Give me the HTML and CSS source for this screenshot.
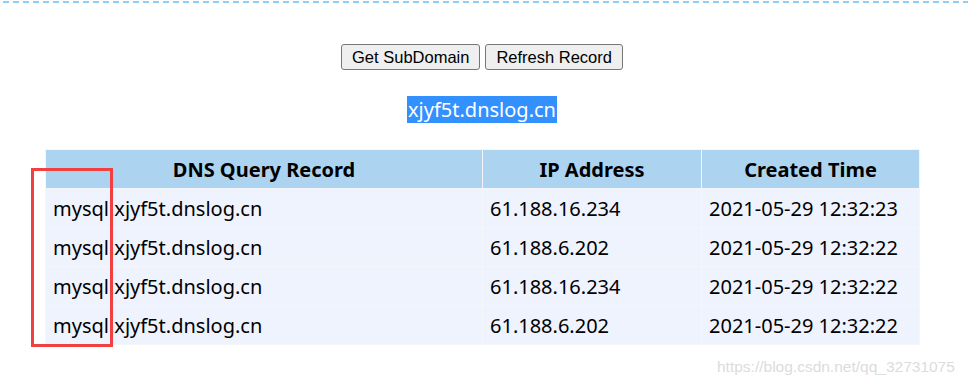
FILE: index.html
```html
<!DOCTYPE html>
<html>
<head>
<meta charset="utf-8">
<link rel="stylesheet" href="styles.css">
</head>
<body>
<div class="topline"></div>
<div class="actions">
  <button class="btn">Get SubDomain</button>
  <button class="btn">Refresh Record</button>
</div>
<div class="domain"><span class="sel">xjyf5t.dnslog.cn</span></div>
<table class="records">
  <thead>
    <tr><th class="c1">DNS Query Record</th><th class="c2">IP Address</th><th class="c3">Created Time</th></tr>
  </thead>
  <tbody>
    <tr><td>mysql.xjyf5t.dnslog.cn</td><td>61.188.16.234</td><td>2021-05-29 12:32:23</td></tr>
    <tr><td>mysql.xjyf5t.dnslog.cn</td><td>61.188.6.202</td><td>2021-05-29 12:32:22</td></tr>
    <tr><td>mysql.xjyf5t.dnslog.cn</td><td>61.188.16.234</td><td>2021-05-29 12:32:22</td></tr>
    <tr><td>mysql.xjyf5t.dnslog.cn</td><td>61.188.6.202</td><td>2021-05-29 12:32:22</td></tr>
  </tbody>
</table>
<div class="redbox"></div>
<div class="watermark">https://blog.csdn.net/qq_32731075</div>
</body>
</html>
```
FILE: styles.css
```css
html, body { margin: 0; padding: 0; background: #fff; }
body {
  position: relative;
  width: 968px;
  height: 386px;
  overflow: hidden;
  font-family: "Noto Sans", "Open Sans", sans-serif;
  color: #000;
}
.topline {
  margin: 1px 0 0 3px;
  height: 2px;
  background: repeating-linear-gradient(to right, #8ecdf8 0 6px, transparent 6px 10px);
}
.actions {
  margin-top: 41px;
  text-align: center;
  padding-right: 4px;
  font-size: 0;
}
.btn {
  font-family: "Liberation Sans", Arial, sans-serif;
  font-size: 16.5px;
  height: 26px;
  padding: 0 10px;
  margin: 0 2.5px;
  border: 1px solid #767676;
  border-radius: 3px;
  background: #efefef;
  color: #000;
  vertical-align: top;
}
.domain {
  margin-top: 27px;
  text-align: center;
  padding-right: 4px;
  height: 26px;
  line-height: 25px;
  font-size: 20px;
}
.sel {
  background: #3390ff;
  color: #fff;
  padding: 0 1px;
}
.records {
  margin: 26px 0 0 45px;
  width: 875px;
  border-collapse: separate;
  border-spacing: 1px;
  font-size: 20px;
  background: #f4f6fb;
}
.records th {
  background: #acd3ef;
  height: 38px;
  padding: 0;
  font-weight: bold;
  text-align: center;
}
.records td {
  background: #eef3fe;
  height: 38px;
  padding: 0 0 0 7px;
  text-align: left;
}
.c1 { width: 436px; }
.c2 { width: 218px; }
.c3 { width: 217px; }
.redbox {
  position: absolute;
  left: 31px;
  top: 168px;
  width: 76px;
  height: 173px;
  border: 3px solid #f04040;
}
.watermark {
  position: absolute;
  left: 717px;
  top: 358px;
  font-family: "Liberation Sans", Arial, sans-serif;
  font-size: 15.5px;
  color: #dcdcdc;
}
```
